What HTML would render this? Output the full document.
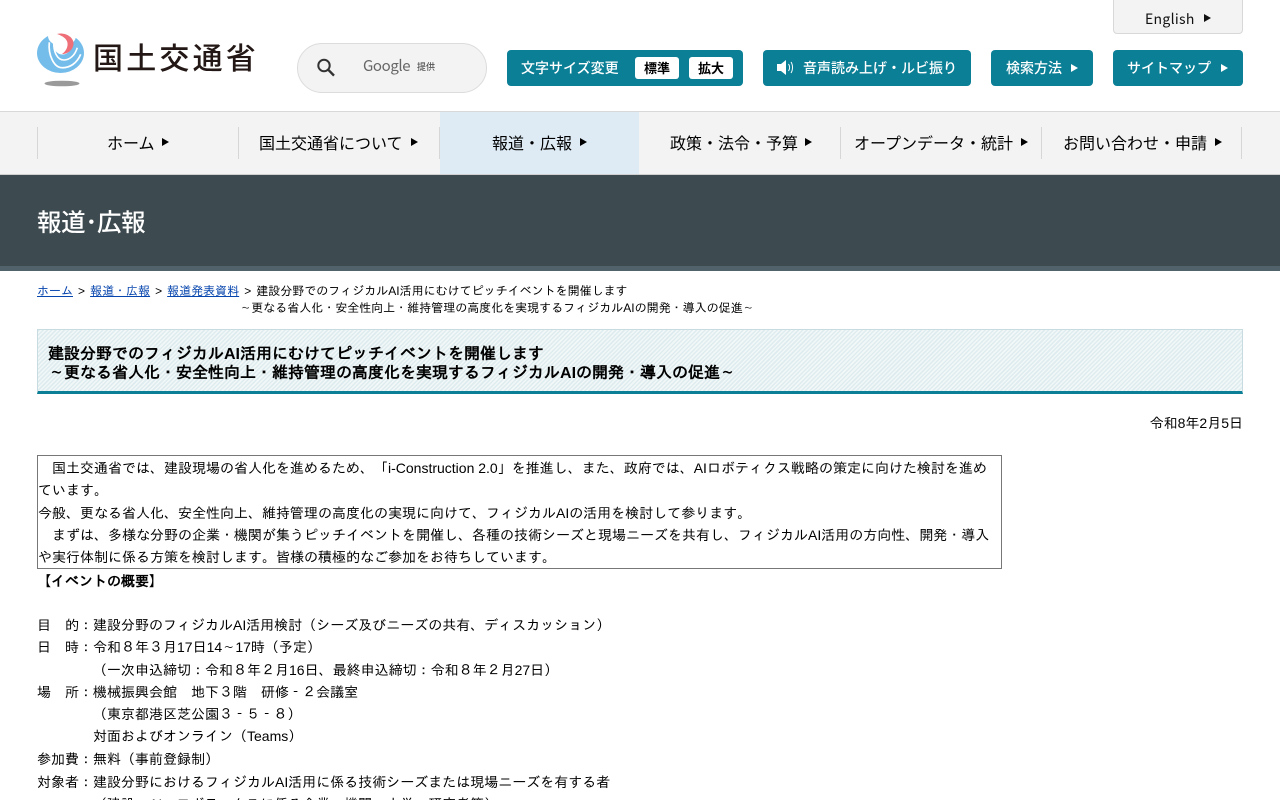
<!DOCTYPE html>
<html lang="ja"><head><meta charset="utf-8"><title>国土交通省</title>
<style>
*{box-sizing:border-box}
html,body{margin:0;padding:0;width:1280px;height:800px;overflow:hidden;background:#fff}
body{position:relative;font-family:"Liberation Sans","IPAGothic",sans-serif;font-size:14px;color:#000}
.a{position:absolute;white-space:nowrap}
.n{font-family:"Noto Sans CJK JP",sans-serif}
.b{position:absolute;background:#0b7f96;border-radius:4px;color:#fff;height:36px;top:50px;line-height:36px;font-size:14px;font-weight:500;font-family:"Noto Sans CJK JP",sans-serif;white-space:nowrap}
.w{position:absolute;top:57px;height:22px;background:#fff;border-radius:3px;color:#000;font-size:13px;font-weight:700;line-height:22px;text-align:center}
.tri{display:inline-block;width:0;height:0;border-left:7px solid currentColor;border-top:4.5px solid transparent;border-bottom:4.5px solid transparent}
.nt{position:absolute;top:126px;height:32px;line-height:32px;font-size:16px;font-weight:400;font-family:"Noto Sans CJK JP",sans-serif;white-space:nowrap;color:#000}
.nt i{position:absolute;top:12px;width:0;height:0;border-left:7px solid #000;border-top:4px solid transparent;border-bottom:4px solid transparent}
.sep{position:absolute;top:127px;height:32px;width:1px;background:#d6d6d6}
.l{position:absolute;left:37px;white-space:nowrap;line-height:22px;height:22px}
a{color:#0645ad}
u{text-decoration:none;font-family:"NanumGothic",sans-serif}
</style></head><body>
<svg class="a" style="left:36px;top:33px" width="50" height="54" viewBox="0 0 50 54">
<ellipse cx="24.5" cy="20" rx="23.5" ry="20" fill="#74bdea"/>
<ellipse cx="26" cy="3" rx="14" ry="10" fill="#fff"/>
<ellipse cx="26.5" cy="11" rx="9.5" ry="10.5" fill="#fff"/>
<path d="M13.3 9.3C12 22 18 34.7 26 34.7C34 35 41 30 44.7 21.3" fill="none" stroke="#fff" stroke-width="1.7"/>
<path d="M18 8.7C17 18 21 27 28 27C34 27 39 22 41.3 14.7" fill="none" stroke="#fff" stroke-width="1.6"/>
<path d="M21 1C29 -1 38 4 37.5 11C37 17 32 21 26 21C30 18 32 14 31.5 10C31 6 27 3 21 1Z" fill="#ee6f78"/>
<ellipse cx="26" cy="50.5" rx="17.5" ry="2.8" fill="#9a9a9a"/>
</svg>
<div class="a n" style="left:93px;top:32px;font-size:30px;line-height:48px;color:#231815;font-weight:500;letter-spacing:3.2px">国土交通省</div>
<div class="a" style="left:297px;top:43px;width:190px;height:50px;border:1px solid #dcdcdc;border-radius:25px;background:#f3f3f3"></div>
<svg class="a" style="left:316px;top:57px" width="20" height="21" viewBox="0 0 20 21"><circle cx="8" cy="8.5" r="5.7" fill="none" stroke="#333" stroke-width="2"/><path d="M12.2 12.7L18 18.6" stroke="#333" stroke-width="2.4" fill="none"/></svg>
<div class="a n" style="left:363px;top:56px;font-size:15px;line-height:20px;color:#666;letter-spacing:-.4px">Google</div>
<div class="a n" style="left:417px;top:60px;font-size:9px;line-height:14px;color:#555;font-weight:500">提供</div>
<div class="a" style="left:1113px;top:-4px;width:130px;height:38px;border:1px solid #d8d8d8;border-radius:4px;background:#f3f3f3"></div>
<div class="a n" style="left:1145px;top:9px;font-size:14px;line-height:20px;color:#111;letter-spacing:.3px">English</div>
<span class="tri a" style="left:1204px;top:14px;color:#111"></span>
<div class="b" style="left:507px;width:236px;padding-left:14px;font-size:14px">文字サイズ変更</div>
<div class="w n" style="left:635px;width:44px">標準</div>
<div class="w n" style="left:689px;width:44px">拡大</div>
<div class="b" style="left:763px;width:208px;padding-left:40px">音声読み上げ・ルビ振り</div>
<svg class="a" style="left:776px;top:59px" width="20" height="17" viewBox="0 0 20 17"><path d="M1 5H5L10 1V16L5 12H1Z" fill="#fff"/><path d="M12.5 5C14 7 14 10 12.5 12M15 3C17 6 17 11 15 14" stroke="#fff" fill="none"/></svg>
<div class="b" style="left:991px;width:102px;padding-left:15px">検索方法</div><span class="tri a" style="left:1071px;top:64px;color:#fff"></span>
<div class="b" style="left:1113px;width:130px;padding-left:14px">サイトマップ</div><span class="tri a" style="left:1221px;top:64px;color:#fff"></span>

<div class="a" style="left:0;top:111px;width:1280px;height:64px;background:#f3f3f3;border-top:1px solid #d8d8d8;border-bottom:1px solid #d0d0d0"></div>
<div class="a" style="left:440px;top:112px;width:199px;height:62px;background:#deebf5"></div>
<div class="sep" style="left:37px"></div><div class="sep" style="left:238px"></div><div class="sep" style="left:439px"></div><div class="sep" style="left:840px"></div><div class="sep" style="left:1041px"></div><div class="sep" style="left:1241px"></div>
<div class="nt" style="left:107px">ホーム<i style="left:55px"></i></div>
<div class="nt" style="left:259px">国土交通省について<i style="left:152px"></i></div>
<div class="nt" style="left:492px">報道・広報<i style="left:88px"></i></div>
<div class="nt" style="left:670px">政策・法令・予算<i style="left:135px"></i></div>
<div class="nt" style="left:854px">オープンデータ・統計<i style="left:167px"></i></div>
<div class="nt" style="left:1063px">お問い合わせ・申請<i style="left:152px"></i></div>

<div class="a" style="left:0;top:175px;width:1280px;height:96px;background:#3d4a50;border-bottom:5px solid #52626a"></div>
<div class="a n" style="left:37px;top:203px;font-size:24.5px;line-height:38px;color:#fff;font-weight:500;letter-spacing:-.4px">報道･広報</div>

<div class="a" style="left:37px;top:282px;font-size:12px;line-height:18px"><a href="#">ホーム</a> <span style="margin:0 1.7px">&gt;</span> <a href="#">報道・広報</a> <span style="margin:0 1.7px">&gt;</span> <a href="#">報道発表資料</a> <span style="margin:0 1.7px">&gt;</span> 建設分野でのフィジカルAI活用にむけてピッチイベントを開催します</div>
<div class="a" style="left:240px;top:299px;font-size:12px;line-height:18px"><u>～</u>更なる省人化・安全性向上・維持管理の高度化を実現するフィジカルAIの開発・導入の促進<u>～</u></div>

<div class="a" style="left:37px;top:329px;width:1206px;height:65px;border:1px solid #c8dbe0;border-bottom:3px solid #0b7f96;background:repeating-linear-gradient(135deg,#dfecef 0,#dfecef 1.5px,#f2f7f8 1.5px,#f2f7f8 3px)"></div>
<div class="a" style="left:48px;top:345px;font-size:16px;line-height:19px;font-weight:bold">建設分野でのフィジカルAI活用にむけてピッチイベントを開催します<br><span style="margin-left:1px"><u>～</u>更なる省人化・安全性向上・維持管理の高度化を実現するフィジカルAIの開発・導入の促進<u>～</u></span></div>
<div class="a" style="right:37px;top:413px;line-height:20px">令和8年2月5日</div>

<div class="a" style="left:37px;top:455px;width:965px;height:114px;border:1px solid #777"></div>
<div class="l" style="left:38px;top:457px">　国土交通省では、建設現場の省人化を進めるため、「i-Construction 2.0」を推進し、また、政府では、AIロボティクス戦略の策定に向けた検討を進め</div>
<div class="l" style="left:38px;top:479px">ています。</div>
<div class="l" style="left:38px;top:502px">今般、更なる省人化、安全性向上、維持管理の高度化の実現に向けて、フィジカルAIの活用を検討して参ります。</div>
<div class="l" style="left:38px;top:524px">　まずは、多様な分野の企業・機関が集うピッチイベントを開催し、各種の技術シーズと現場ニーズを共有し、フィジカルAI活用の方向性、開発・導入</div>
<div class="l" style="left:38px;top:546px">や実行体制に係る方策を検討します。皆様の積極的なご参加をお待ちしています。</div>
<div class="l" style="top:570px;font-weight:bold">【イベントの概要】</div>
<div class="l" style="top:614px">目　的：建設分野のフィジカルAI活用検討（シーズ及びニーズの共有、ディスカッション）</div>
<div class="l" style="top:636px">日　時：令和８年３月17日14<u>～</u>17時（予定）</div>
<div class="l" style="top:659px">　　　　（一次申込締切：令和８年２月16日、最終申込締切：令和８年２月27日）</div>
<div class="l" style="top:681px">場　所：機械振興会館　地下３階　研修<u>－</u>２会議室</div>
<div class="l" style="top:703px">　　　　（東京都港区芝公園３<u>－</u>５<u>－</u>８）</div>
<div class="l" style="top:725px">　　　　対面およびオンライン（Teams）</div>
<div class="l" style="top:748px">参加費：無料（事前登録制）</div>
<div class="l" style="top:771px">対象者：建設分野におけるフィジカルAI活用に係る技術シーズまたは現場ニーズを有する者</div>
<div class="l" style="top:793px">　　　　（建設・AI・ロボティクスに係る企業・機関、大学、研究者等）</div>
</body></html>
